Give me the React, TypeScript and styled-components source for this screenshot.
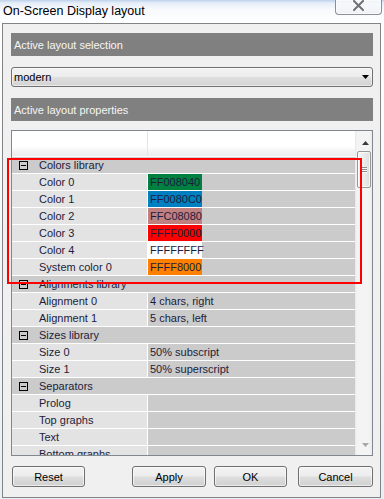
import React from "react";
import styled, { createGlobalStyle } from "styled-components";

const GlobalStyle = createGlobalStyle`
  html, body { margin: 0; padding: 0; }
  body {
    width: 384px;
    height: 499px;
    overflow: hidden;
    background: #eef3f9;
    font-family: "Liberation Sans", Arial, sans-serif;
  }
  * { box-sizing: border-box; }
`;

const Window = styled.div`
  position: relative;
  width: 384px;
  height: 499px;
  display: flex;
  flex-direction: column;
  background: linear-gradient(180deg, #bfd2ea 0px, #e6eef8 3px, #f8fafd 10px, #fdfeff 22px, #f2f6fb 60%, #e7eff9 100%);
`;

const TitleBar = styled.div`
  height: 23px;
  display: flex;
  justify-content: space-between;
  align-items: flex-start;
  padding: 0 2px 0 3px;
`;

const Title = styled.div`
  font-size: 12.5px;
  color: #000;
  padding-top: 4px;
  letter-spacing: 0;
`;

const CloseButton = styled.div`
  width: 47px;
  height: 15px;
  border: 1px solid #8b8f96;
  border-top: none;
  border-radius: 0 0 4px 4px;
  background: linear-gradient(180deg, rgba(255,255,255,0.7), rgba(235,240,246,0.85));
  box-shadow: inset 0 0 0 1px rgba(255,255,255,0.6);
  display: flex;
  justify-content: center;
  align-items: flex-start;
  padding-top: 0px;
`;

const Client = styled.div`
  margin-left: 2px;
  width: 379px;
  height: 475px;
  border: 1px solid #838383;
  background: #f0f0f0;
  padding: 9px 7px 10px 8px;
  display: flex;
  flex-direction: column;
`;

const SectionHeader = styled.div<{ $mt?: number }>`
  height: 23px;
  margin-top: ${(p) => p.$mt ?? 0}px;
  background: #808080;
  color: #f6f6f6;
  font-size: 11px;
  padding-left: 3px;
  display: flex;
  align-items: center;
`;

const Dropdown = styled.div`
  margin-top: 11px;
  height: 20px;
  border: 1px solid #707070;
  border-radius: 3px;
  background: linear-gradient(180deg, #f3f3f3 0%, #ececec 48%, #dfdfdf 52%, #d2d2d2 100%);
  box-shadow: inset 0 0 0 1px rgba(255,255,255,0.55);
  padding: 0 3px 0 2px;
  display: flex;
  align-items: center;
  justify-content: space-between;
  font-size: 11px;
  color: #000;
`;

const Grid = styled.div`
  margin-top: 9px;
  height: 326px;
  border: 1px solid #828790;
  background: #fff;
  display: flex;
`;

const GridBody = styled.div`
  flex: 1;
  display: flex;
  flex-direction: column;
  overflow: hidden;
  font-size: 11px;
  color: #1c1c3c;
`;

const GridHeader = styled.div`
  height: 25px;
  flex: none;
  display: flex;
  background: linear-gradient(180deg, #ffffff 0%, #ffffff 62%, #f4f4f4 80%, #ececec 100%);
`;

const HeaderCell = styled.div<{ $w?: number }>`
  width: ${(p) => (p.$w ? `${p.$w}px` : "auto")};
  flex: ${(p) => (p.$w ? "none" : "1")};
  border-right: ${(p) => (p.$w ? "1px solid #e4e4e4" : "none")};
`;

const Row = styled.div`
  flex: none;
  height: 17px;
  border-top: 1px solid #fff;
  display: flex;
  line-height: 16px;
`;

const CategoryRow = styled(Row)`
  background: #cbcbcb;
  align-items: center;
  padding-left: 7px;
`;

const Expander = styled.div`
  width: 9px;
  height: 9px;
  border: 1px solid #000;
  display: flex;
  align-items: center;
  justify-content: center;
  margin-right: 11px;
  &::after {
    content: "";
    width: 5px;
    height: 1px;
    background: #000;
  }
`;

const NameCell = styled.div`
  width: 136px;
  flex: none;
  background: #e3e3e3;
  padding-left: 27px;
  white-space: nowrap;
  border-right: 1px solid #fff;
`;

const ValueCell = styled.div`
  flex: 1;
  background: #cbcbcb;
  padding-left: 2px;
  white-space: nowrap;
  display: flex;
`;

const Swatch = styled.div<{ $c: string }>`
  width: 54px;
  margin-left: -2px;
  background: ${(p) => p.$c};
  padding-left: 2px;
  color: #1c1c3c;
`;

const ScrollBar = styled.div`
  width: 17px;
  flex: none;
  display: flex;
  flex-direction: column;
  background: linear-gradient(90deg, #e8e8e8 0px, #f4f4f4 2px, #f4f4f4 14px, #ebebeb 100%);
`;

const ArrowBtn = styled.div<{ $h: number; $pt: number }>`
  height: ${(p) => p.$h}px;
  flex: none;
  display: flex;
  justify-content: center;
  padding-top: ${(p) => p.$pt}px;
  padding-left: 3px;
`;

const Track = styled.div`
  flex: 1;
  padding: 0 1px 0 2px;
`;

const Thumb = styled.div`
  height: 37px;
  border: 1px solid #979797;
  border-radius: 2px;
  background: linear-gradient(90deg, #f5f5f5 0%, #ececec 50%, #dcdcdc 100%);
  box-shadow: inset 0 0 0 1px rgba(255,255,255,0.7);
  display: flex;
  flex-direction: column;
  align-items: center;
  justify-content: center;
  gap: 1px;
`;

const Grip = styled.div`
  width: 6px;
  height: 1px;
  background: #8c8c8c;
  box-shadow: 0 1px 0 #fafafa;
`;

const ButtonRow = styled.div`
  margin-top: 10px;
  height: 21px;
  display: flex;
`;

const Button = styled.div<{ $w: number; $ml: number }>`
  width: ${(p) => p.$w}px;
  margin-left: ${(p) => p.$ml}px;
  height: 21px;
  border: 1px solid #707070;
  border-radius: 3px;
  background: linear-gradient(180deg, #f3f3f3 0%, #ececec 48%, #dedede 52%, #d0d0d0 100%);
  box-shadow: inset 0 0 0 1px rgba(255,255,255,0.6);
  display: flex;
  align-items: center;
  justify-content: center;
  font-size: 11px;
  color: #000;
`;

const Annotation = styled.div`
  position: absolute;
  left: 7px;
  top: 158px;
  width: 355px;
  height: 126px;
  border: 2px solid #ff0000;
  pointer-events: none;
`;

type Prop = { name: string; value?: string; color?: string };
type Category = { title: string; props: Prop[] };

const data: Category[] = [
  {
    title: "Colors library",
    props: [
      { name: "Color 0", value: "FF008040", color: "#008040" },
      { name: "Color 1", value: "FF0080C0", color: "#0080C0" },
      { name: "Color 2", value: "FFC08080", color: "#C08080" },
      { name: "Color 3", value: "FFFF0000", color: "#FF0000" },
      { name: "Color 4", value: "FFFFFFFF", color: "#FFFFFF" },
      { name: "System color 0", value: "FFFF8000", color: "#FF8000" },
    ],
  },
  {
    title: "Alignments library",
    props: [
      { name: "Alignment 0", value: "4 chars, right" },
      { name: "Alignment 1", value: "5 chars, left" },
    ],
  },
  {
    title: "Sizes library",
    props: [
      { name: "Size 0", value: "50% subscript" },
      { name: "Size 1", value: "50% superscript" },
    ],
  },
  {
    title: "Separators",
    props: [
      { name: "Prolog" },
      { name: "Top graphs" },
      { name: "Text" },
      { name: "Bottom graphs" },
    ],
  },
];

const Tri = ({ up, color }: { up?: boolean; color: string }) => (
  <svg width="7" height="4" viewBox="0 0 7 4">
    <polygon points={up ? "3.5,0 7,4 0,4" : "0,0 7,0 3.5,4"} fill={color} />
  </svg>
);

export default function App() {
  return (
    <>
      <GlobalStyle />
      <Window>
        <TitleBar>
          <Title>On-Screen Display layout</Title>
          <CloseButton>
            <svg width="13" height="11" viewBox="0 0 13 11">
              <path d="M2 1 L11 10 M11 1 L2 10" stroke="#ffffff" strokeWidth="4" strokeLinecap="round" />
              <path d="M2 1 L11 10 M11 1 L2 10" stroke="#6f747c" strokeWidth="2.2" strokeLinecap="round" />
            </svg>
          </CloseButton>
        </TitleBar>
        <Client>
          <SectionHeader>Active layout selection</SectionHeader>
          <Dropdown>
            <span>modern</span>
            <Tri color="#000" />
          </Dropdown>
          <SectionHeader $mt={11}>Active layout properties</SectionHeader>
          <Grid>
            <GridBody>
              <GridHeader>
                <HeaderCell $w={136} />
                <HeaderCell />
              </GridHeader>
              {data.map((cat) => (
                <React.Fragment key={cat.title}>
                  <CategoryRow>
                    <Expander />
                    <span>{cat.title}</span>
                  </CategoryRow>
                  {cat.props.map((p) => (
                    <Row key={p.name}>
                      <NameCell>{p.name}</NameCell>
                      <ValueCell>
                        {p.color ? <Swatch $c={p.color}>{p.value}</Swatch> : p.value}
                      </ValueCell>
                    </Row>
                  ))}
                </React.Fragment>
              ))}
            </GridBody>
            <ScrollBar>
              <ArrowBtn $h={20} $pt={10}>
                <Tri up color="#3a3a3a" />
              </ArrowBtn>
              <Track>
                <Thumb>
                  <Grip />
                  <Grip />
                  <Grip />
                </Thumb>
              </Track>
              <ArrowBtn $h={17} $pt={5}>
                <Tri color="#a8a8a8" />
              </ArrowBtn>
            </ScrollBar>
          </Grid>
          <ButtonRow>
            <Button $w={73} $ml={1}>Reset</Button>
            <Button $w={74} $ml={47}>Apply</Button>
            <Button $w={73} $ml={8}>OK</Button>
            <Button $w={75} $ml={11}>Cancel</Button>
          </ButtonRow>
        </Client>
        <Annotation />
      </Window>
    </>
  );
}
